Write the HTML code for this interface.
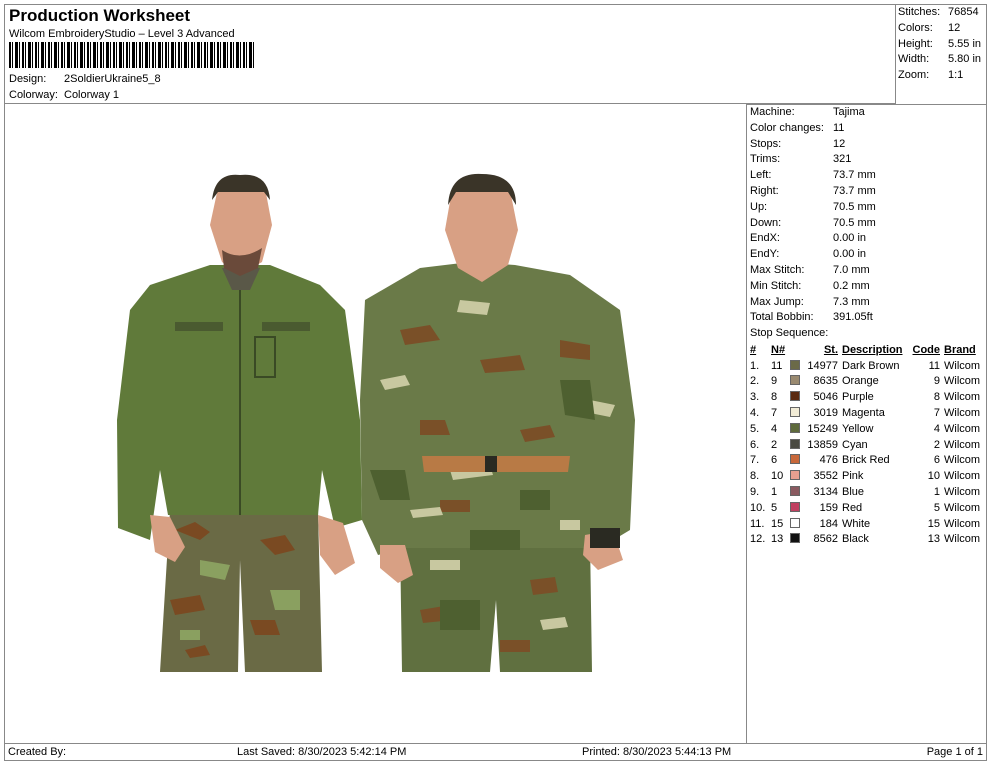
<!DOCTYPE html>
<html><head><meta charset="utf-8"><style>
*{margin:0;padding:0;box-sizing:border-box}
body{width:990px;height:762px;background:#fff;font-family:"Liberation Sans",Arial,sans-serif;font-size:11px;color:#000;position:relative;overflow:hidden}
.a{position:absolute;white-space:nowrap}
.bx{position:absolute;border:1px solid #888}
.bar{position:absolute;left:9px;top:42px;width:247px;height:26px;
background:repeating-linear-gradient(90deg,#000 0 2px,#fff 2px 3px,#000 3px 4px,#fff 4px 6px,#000 6px 9px,#fff 9px 10px,#000 10px 11px,#fff 11px 13px)}
table{border-collapse:collapse;font-size:11px}
td{padding:0;height:15.8px;white-space:nowrap}
.sw{display:inline-block;width:10px;height:10px;border:1px solid #666;vertical-align:-1px}
</style></head><body>
<div class="bx" style="left:4px;top:4px;width:983px;height:757px"></div>
<div class="bx" style="left:4px;top:4px;width:892px;height:100px;border-right:1px solid #888"></div>
<div class="bx" style="left:746px;top:104px;width:241px;height:640px"></div>
<div class="bx" style="left:4px;top:743px;width:983px;height:18px"></div>
<div class="a" style="left:9px;top:6px;font-size:17px;font-weight:bold">Production Worksheet</div>
<div class="a" style="left:9px;top:28px">Wilcom EmbroideryStudio – Level 3 Advanced</div>
<div class="bar"></div>
<div class="a" style="left:9px;top:73px">Design:</div><div class="a" style="left:64px;top:73px">2SoldierUkraine5_8</div>
<div class="a" style="left:9px;top:89px">Colorway:</div><div class="a" style="left:64px;top:89px">Colorway 1</div>
<div class="a" style="left:898px;top:5px;line-height:15.8px">Stitches:<br>Colors:<br>Height:<br>Width:<br>Zoom:</div>
<div class="a" style="left:948px;top:5px;line-height:15.8px">76854<br>12<br>5.55 in<br>5.80 in<br>1:1</div>
<div class="a" style="left:750px;top:104px;line-height:15.8px;padding-top:1px">Machine:<br>Color changes:<br>Stops:<br>Trims:<br>Left:<br>Right:<br>Up:<br>Down:<br>EndX:<br>EndY:<br>Max Stitch:<br>Min Stitch:<br>Max Jump:<br>Total Bobbin:<br>Stop Sequence:</div>
<div class="a" style="left:833px;top:104px;line-height:15.8px;padding-top:1px">Tajima<br>11<br>12<br>321<br>73.7 mm<br>73.7 mm<br>70.5 mm<br>70.5 mm<br>0.00 in<br>0.00 in<br>7.0 mm<br>0.2 mm<br>7.3 mm<br>391.05ft</div>
<table class="a" style="left:750px;top:342px">
<tr style="font-weight:bold;text-decoration:underline"><td style="width:21px">#</td><td style="width:19px">N#</td><td style="width:14px"></td><td style="width:34px;text-align:right">St.</td><td style="width:70px;padding-left:4px">Description</td><td style="width:32px;text-align:right">Code</td><td style="padding-left:4px">Brand</td></tr>
<tr><td>1.</td><td>11</td><td><span class="sw" style="background:#6b6a48"></span></td><td align="right">14977</td><td style="padding-left:4px">Dark Brown</td><td align="right">11</td><td style="padding-left:4px">Wilcom</td></tr>
<tr><td>2.</td><td>9</td><td><span class="sw" style="background:#9a8a70"></span></td><td align="right">8635</td><td style="padding-left:4px">Orange</td><td align="right">9</td><td style="padding-left:4px">Wilcom</td></tr>
<tr><td>3.</td><td>8</td><td><span class="sw" style="background:#5a2a10"></span></td><td align="right">5046</td><td style="padding-left:4px">Purple</td><td align="right">8</td><td style="padding-left:4px">Wilcom</td></tr>
<tr><td>4.</td><td>7</td><td><span class="sw" style="background:#f2ecd6"></span></td><td align="right">3019</td><td style="padding-left:4px">Magenta</td><td align="right">7</td><td style="padding-left:4px">Wilcom</td></tr>
<tr><td>5.</td><td>4</td><td><span class="sw" style="background:#5e6a3c"></span></td><td align="right">15249</td><td style="padding-left:4px">Yellow</td><td align="right">4</td><td style="padding-left:4px">Wilcom</td></tr>
<tr><td>6.</td><td>2</td><td><span class="sw" style="background:#4a4a42"></span></td><td align="right">13859</td><td style="padding-left:4px">Cyan</td><td align="right">2</td><td style="padding-left:4px">Wilcom</td></tr>
<tr><td>7.</td><td>6</td><td><span class="sw" style="background:#c8683a"></span></td><td align="right">476</td><td style="padding-left:4px">Brick Red</td><td align="right">6</td><td style="padding-left:4px">Wilcom</td></tr>
<tr><td>8.</td><td>10</td><td><span class="sw" style="background:#e8a090"></span></td><td align="right">3552</td><td style="padding-left:4px">Pink</td><td align="right">10</td><td style="padding-left:4px">Wilcom</td></tr>
<tr><td>9.</td><td>1</td><td><span class="sw" style="background:#8a5a60"></span></td><td align="right">3134</td><td style="padding-left:4px">Blue</td><td align="right">1</td><td style="padding-left:4px">Wilcom</td></tr>
<tr><td>10.</td><td>5</td><td><span class="sw" style="background:#c04060"></span></td><td align="right">159</td><td style="padding-left:4px">Red</td><td align="right">5</td><td style="padding-left:4px">Wilcom</td></tr>
<tr><td>11.</td><td>15</td><td><span class="sw" style="background:#fff"></span></td><td align="right">184</td><td style="padding-left:4px">White</td><td align="right">15</td><td style="padding-left:4px">Wilcom</td></tr>
<tr><td>12.</td><td>13</td><td><span class="sw" style="background:#111"></span></td><td align="right">8562</td><td style="padding-left:4px">Black</td><td align="right">13</td><td style="padding-left:4px">Wilcom</td></tr>
</table>
<div class="a" style="left:8px;top:746px">Created By:</div>
<div class="a" style="left:237px;top:746px">Last Saved: 8/30/2023 5:42:14 PM</div>
<div class="a" style="left:582px;top:746px">Printed: 8/30/2023 5:44:13 PM</div>
<div class="a" style="right:7px;top:746px">Page 1 of 1</div>
<svg class="a" style="left:0;top:0" width="745" height="742" viewBox="0 0 745 742">
<!-- left man -->
<path d="M170,510 L318,510 L322,672 L245,672 L240,560 L238,672 L160,672 Z" fill="#6a6a45"/>
<path d="M175,530 l20,-8 15,10 -10,8z M260,540 l25,-5 10,15 -20,5z M170,600 l30,-5 5,15 -30,5z M250,620 l25,0 5,15 -25,0z M185,650 l20,-5 5,10 -20,3z" fill="#7a4a22"/>
<path d="M200,560 l30,5 -5,15 -25,-5z M270,590 l30,0 0,20 -25,0z M180,630 l20,0 0,10 -20,0z" fill="#8aa060"/>
<path d="M210,265 L270,265 L320,285 L345,310 L360,420 L362,520 L335,528 L322,470 L318,515 L168,515 L160,470 L150,540 L118,528 L117,420 L130,310 L150,285 Z" fill="#607a3a"/>
<path d="M222,268 L260,268 L250,290 L232,290 Z" fill="#5a5848"/>
<rect x="175" y="322" width="48" height="9" fill="#4a5a30"/><rect x="262" y="322" width="48" height="9" fill="#4a5a30"/>
<rect x="255" y="337" width="20" height="40" fill="none" stroke="#3a4a25" stroke-width="2"/>
<line x1="240" y1="290" x2="240" y2="515" stroke="#3a4a25" stroke-width="2"/>
<path d="M218,188 Q240,170 265,188 L272,225 L262,262 L240,275 L222,262 L210,225 Z" fill="#d8a084"/>
<path d="M212,200 Q215,172 240,175 Q268,172 270,200 L264,192 L218,192 Z" fill="#3a3428"/>
<path d="M222,250 Q240,262 262,248 L258,268 L240,276 L224,268 Z" fill="#6a4a3a"/>
<path d="M150,515 l20,2 15,30 -10,15 -20,-10z M318,515 l25,8 12,40 -20,12 -15,-20z" fill="#d8a084"/>
<!-- right man -->
<path d="M400,540 L590,540 L592,672 L500,672 L496,600 L490,672 L402,672 Z" fill="#607040"/>
<path d="M365,300 L420,268 L470,262 L515,265 L570,275 L620,310 L635,420 L630,530 L605,545 L590,548 L405,548 L378,555 L362,520 L360,400 Z" fill="#6a7a48"/>
<path d="M400,330 l30,-5 10,15 -35,5z M480,360 l40,-5 5,15 -40,3z M560,340 l30,5 0,15 -30,-3z M420,420 l25,0 5,15 -30,0z M520,430 l30,-5 5,12 -30,5z M440,500 l30,0 0,12 -30,0z M530,580 l25,-3 3,15 -25,3z M420,610 l30,-5 3,15 -30,3z M500,640 l30,0 0,12 -30,0z" fill="#7a5028"/>
<path d="M380,380 l25,-5 5,10 -25,5z M460,300 l30,3 -3,12 -30,-3z M590,400 l25,5 -5,12 -25,-5z M450,470 l40,-5 3,10 -40,5z M560,520 l20,0 0,10 -20,0z M430,560 l30,0 0,10 -30,0z M540,620 l25,-3 3,10 -25,3z M410,510 l30,-3 3,8 -30,3z" fill="#c8c8a0"/>
<path d="M370,470 l35,0 5,30 -30,0z M560,380 l30,0 5,40 -30,-5z M470,530 l50,0 0,20 -50,0z M440,600 l40,0 0,30 -40,0z M520,490 l30,0 0,20 -30,0z" fill="#4e6030"/>
<path d="M422,456 L570,456 L568,472 L424,472 Z" fill="#b87a45"/>
<rect x="485" y="456" width="12" height="16" fill="#2a2a22"/>
<path d="M452,190 Q480,172 510,190 L518,230 L508,265 L482,282 L458,268 L445,230 Z" fill="#d8a084"/>
<path d="M448,205 Q450,172 482,174 Q516,174 516,205 L508,192 L456,192 Z" fill="#3a3428"/>
<path d="M380,545 l25,0 8,30 -15,8 -18,-15z M585,535 l28,-5 10,30 -25,10 -15,-15z" fill="#d8a084"/>
<rect x="590" y="528" width="30" height="20" fill="#2a2a22"/>
</svg>
</body></html>
